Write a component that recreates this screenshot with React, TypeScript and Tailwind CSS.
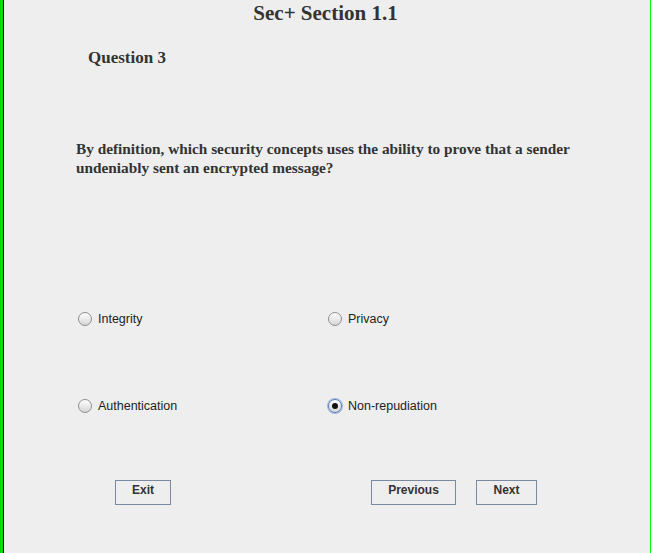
import { useState } from "react"

const serif = { fontFamily: '"Liberation Serif", "Times New Roman", serif' }
const sans = { fontFamily: '"Liberation Sans", Arial, sans-serif' }

const options = ["Integrity", "Privacy", "Authentication", "Non-repudiation"]

function Radio({ label, checked, onSelect }: { label: string; checked: boolean; onSelect: () => void }) {
  return (
    <button onClick={onSelect} className="flex items-center gap-[6px] h-[20px] text-left" style={sans}>
      <span
        className={`relative flex items-center justify-center w-[14px] h-[14px] rounded-full border ${
          checked ? "border-[#5a7fb8] ring-1 ring-[#9fb6dd]" : "border-[#8e8e8e]"
        } bg-gradient-to-b from-[#ffffff] to-[#d6d6d6]`}
      >
        {checked && <span className="w-[6px] h-[6px] rounded-full bg-[#111111]" />}
      </span>
      <span className="text-[12.5px] text-[#222222] leading-none">{label}</span>
    </button>
  )
}

function JButton({ children, width }: { children: string; width: string }) {
  return (
    <button
      className={`${width} h-[25px] border border-[#7a8aa0] bg-[#eeeeee] text-[12px] font-bold text-[#333333] leading-none pb-[5px]`}
      style={sans}
    >
      {children}
    </button>
  )
}

export default function App() {
  const [selected, setSelected] = useState(3)

  return (
    <div className="w-[651px] h-[553px] bg-[#eeeeee] border-l-[3px] border-l-[#00e000] border-r border-r-[#00ff00] shadow-[inset_1px_0_0_#000] flex flex-col overflow-hidden">
      <h1 className="text-center text-[21px] font-bold text-[#333333] leading-[24px] mt-[1px] pr-[2px]" style={serif}>
        Sec+ Section 1.1
      </h1>

      <h2 className="ml-[85px] mt-[23px] text-[17px] font-bold text-[#333333] leading-[20px]" style={serif}>
        Question 3
      </h2>

      <p className="ml-[73px] mr-[50px] mt-[71px] text-[15.3px] font-bold text-[#333333] leading-[19px]" style={serif}>
        By definition, which security concepts uses the ability to prove that a sender undeniably sent an encrypted message?
      </p>

      <div className="ml-[75px] mt-[132px] grid grid-cols-[250px_250px] gap-y-[67px]">
        {options.map((o, i) => (
          <Radio key={o} label={o} checked={selected === i} onSelect={() => setSelected(i)} />
        ))}
      </div>

      <div className="mt-[60px] flex">
        <div className="ml-[112px]">
          <JButton width="w-[56px]">Exit</JButton>
        </div>
        <div className="ml-[200px]">
          <JButton width="w-[85px]">Previous</JButton>
        </div>
        <div className="ml-[20px]">
          <JButton width="w-[61px]">Next</JButton>
        </div>
      </div>
    </div>
  )
}
